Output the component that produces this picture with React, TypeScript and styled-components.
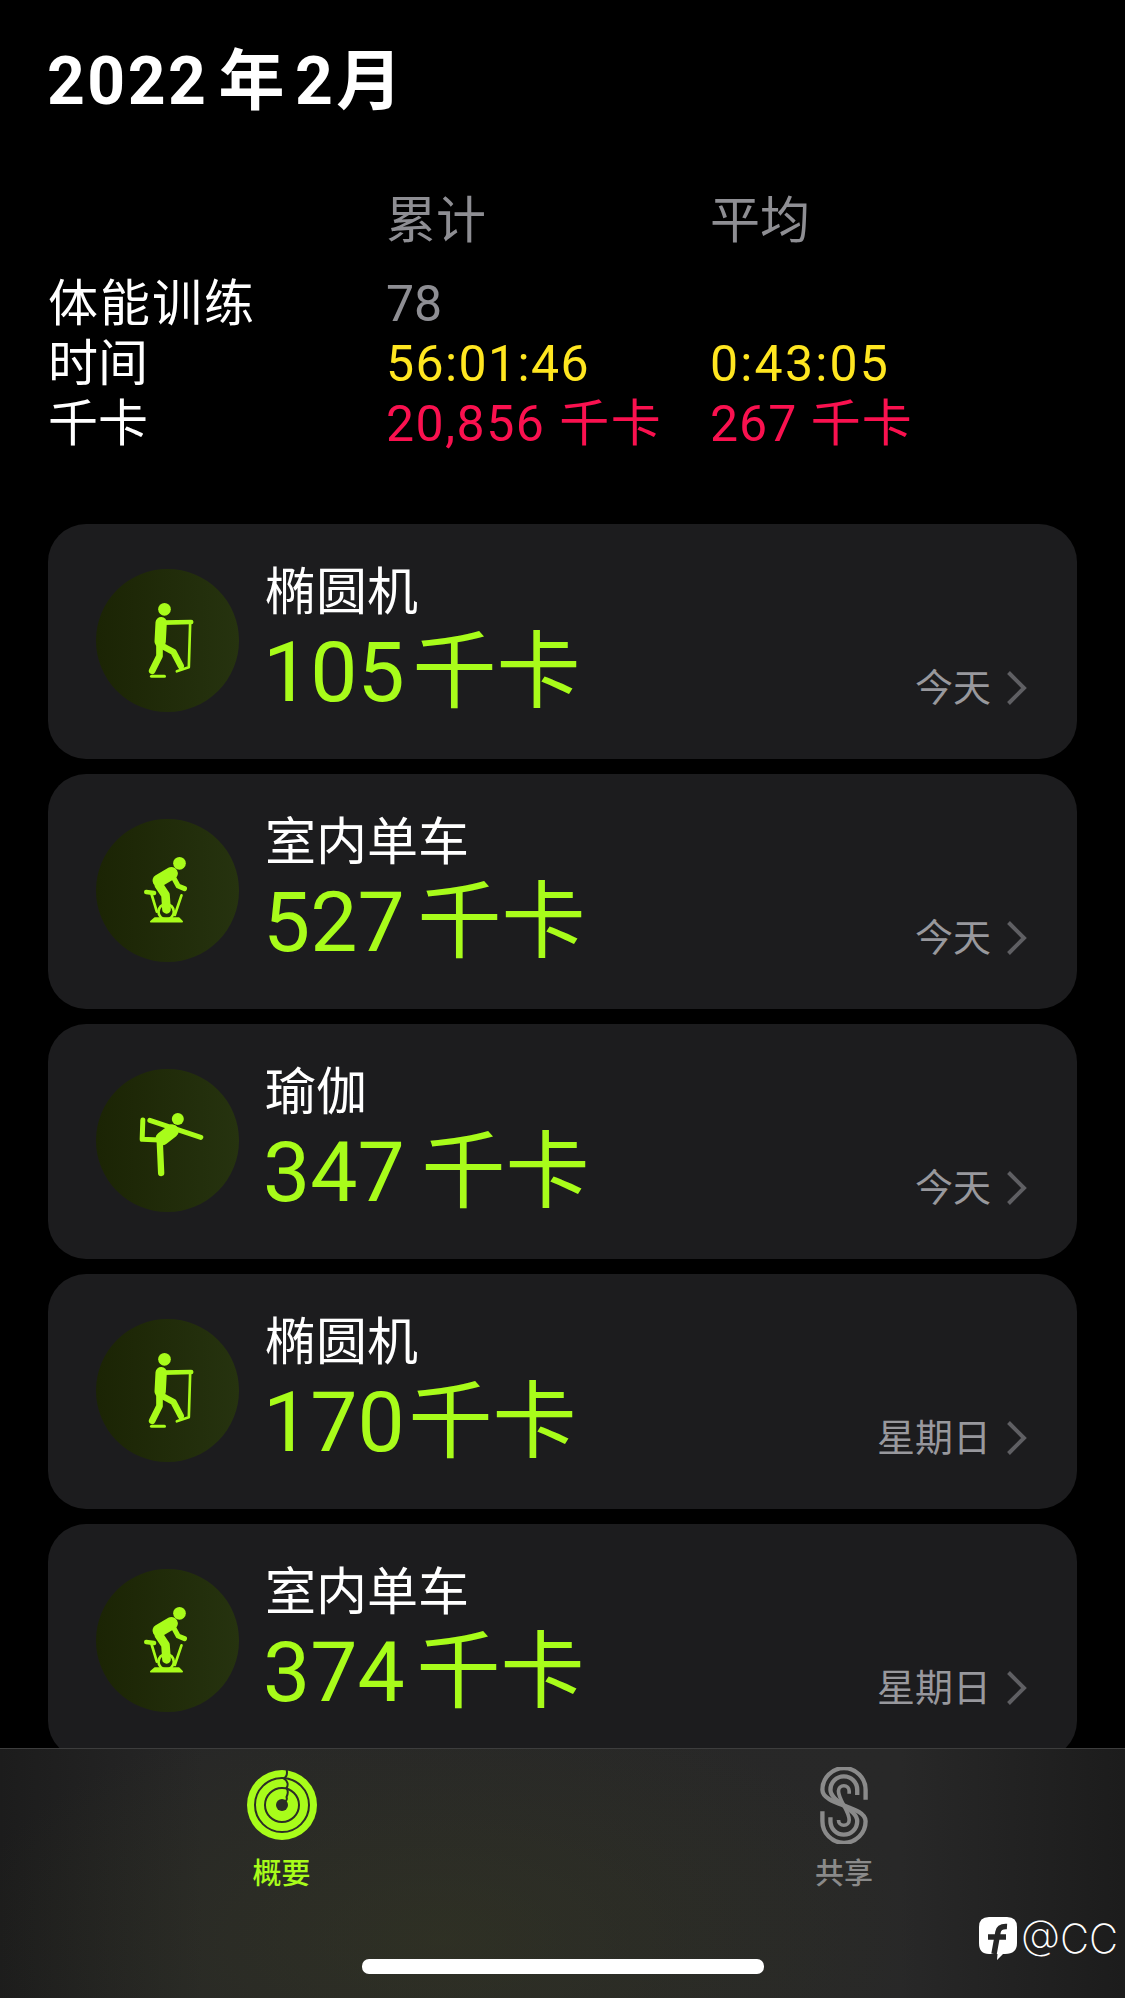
import React from "react";
import styled, { createGlobalStyle } from "styled-components";

const Global = createGlobalStyle`
  html, body { margin: 0; padding: 0; background: #000; }
  body { font-family: Roboto, "Noto Sans CJK SC", sans-serif; }
`;

const Page = styled.div`
  position: relative;
  width: 1125px;
  height: 1998px;
  overflow: hidden;
  background: #000;
  padding: 43px 48px 0;
  box-sizing: border-box;
`;

const Title = styled.h1`
  margin: 0 0 0 -1px;
  display: flex;
  font-size: 66px;
  line-height: 78px;
  font-weight: 700;
  letter-spacing: 2.5px;
  color: #fff;
`;

const TitlePart = styled.span<{ $gap: number }>`
  margin-right: ${(p) => p.$gap}px;
`;

const Stats = styled.section`
  display: grid;
  grid-template-columns: 338px 324px 1fr;
  grid-template-rows: 83px 60px 60px 60px;
  margin-top: 70px;
  font-size: 50px;
  line-height: 60px;
`;

const Cell = styled.div<{ $c: string; $ls?: number }>`
  color: ${(p) => p.$c};
  white-space: nowrap;
  letter-spacing: ${(p) => p.$ls ?? 0}px;
`;

const Cards = styled.div`
  display: flex;
  flex-direction: column;
  gap: 15px;
  margin-top: 70px;
`;

const Card = styled.article`
  position: relative;
  display: flex;
  align-items: flex-start;
  height: 235px;
  flex: none;
  box-sizing: border-box;
  padding: 45px 48px 0 48px;
  background: #1c1c1e;
  border-radius: 38px;
`;

const Badge = styled.div`
  flex: none;
  width: 143px;
  height: 143px;
  border-radius: 50%;
  background: linear-gradient(90deg, #1b2404 0%, #26330f 100%);
`;

const BadgeIcon = styled.svg`
  display: block;
  width: 143px;
  height: 143px;
`;

const Info = styled.div`
  flex: 1;
  margin-left: 26px;
  margin-top: -8px;
`;

const Name = styled.div`
  font-size: 51px;
  line-height: 64px;
  color: #fff;
`;

const Kcal = styled.div<{ $ws: number }>`
  font-size: 84px;
  line-height: 96px;
  color: #a8fc1a;
  margin-left: -2px;
  white-space: nowrap;
  word-spacing: ${(p) => p.$ws}px;
`;

const Day = styled.div`
  display: flex;
  align-items: center;
  gap: 15px;
  margin-top: 94px;
  font-size: 38px;
  line-height: 50px;
  color: #98989d;
  margin-right: 2px;
`;

const Chevron = styled.svg`
  width: 21px;
  height: 36px;
  flex: none;
`;

const TabBar = styled.nav`
  position: absolute;
  left: 0;
  right: 0;
  bottom: 0;
  height: 250px;
  border-top: 1px solid #3d3d3d;
  box-sizing: border-box;
  background:
    radial-gradient(ellipse 480px 240px at 440px 190px, rgba(56, 60, 32, 0.42), rgba(56, 60, 32, 0) 100%),
    linear-gradient(90deg, #1c1c1c 0%, #272727 18%, #282828 80%, #1c1c1c 100%);
`;

const Tabs = styled.div`
  display: grid;
  grid-template-columns: 563px 562px;
`;

const Tab = styled.div<{ $c: string }>`
  display: flex;
  flex-direction: column;
  align-items: center;
  color: ${(p) => p.$c};
  font-size: 29px;
  font-weight: 500;
  line-height: 36px;
`;

const IconSlot = styled.div<{ $top: number }>`
  height: 107px;
  padding-top: ${(p) => p.$top}px;
  box-sizing: border-box;
`;

const TabIcon = styled.svg`
  display: block;
`;

const Home = styled.div`
  position: absolute;
  left: 362px;
  top: 210px;
  width: 402px;
  height: 15px;
  border-radius: 7px;
  background: #fff;
`;

const Watermark = styled.div`
  position: absolute;
  left: 978px;
  top: 168px;
  display: flex;
  align-items: center;
  gap: 3px;
  color: #fff;
  font-family: Inter, sans-serif;
  font-weight: 200;
  font-size: 40px;
  line-height: 44px;
`;

const Gr = "#a8fc1a";
const Dark = "#2b2d26";

const Elliptical = () => (
  <BadgeIcon viewBox="0 0 143 143">
    <g transform="translate(3.5 11) scale(.3333)" fill="none" stroke={Gr} strokeLinecap="round" strokeLinejoin="round">
      <circle cx="195" cy="88" r="19" fill={Gr} stroke="none" />
      <path d="M185 128 L182 185" strokeWidth="34" />
      <path d="M192 128 L275 126" strokeWidth="14" />
      <path d="M272 130 L268 262 L232 274" strokeWidth="8" />
      <path d="M180 190 L180 228 L158 272" strokeWidth="20" />
      <path d="M187 197 L222 216 L244 258" strokeWidth="19" />
      <path d="M156 289 L195 289" strokeWidth="9" />
    </g>
  </BadgeIcon>
);

const Bike = () => (
  <BadgeIcon viewBox="0 0 143 143">
    <g transform="translate(3.5 11) scale(.3333)" fill="none" stroke={Gr} strokeLinecap="round" strokeLinejoin="round">
      <circle cx="240" cy="100" r="19" fill={Gr} stroke="none" />
      <path d="M178 152 L216 130" strokeWidth="38" />
      <path d="M218 135 L236 168 L255 176" strokeWidth="15" />
      <path d="M178 165 L198 195 L201 238" strokeWidth="26" />
      <circle cx="200" cy="245" r="23" strokeWidth="8" />
      <path d="M140 186 L164 189" strokeWidth="13" />
      <path d="M156 192 L172 245" strokeWidth="8" />
      <path d="M246 196 L226 255" strokeWidth="8" />
      <path d="M154 275 L248 275 L238 264 L166 264 Z" fill={Gr} strokeWidth="5" />
    </g>
  </BadgeIcon>
);

const Yoga = () => (
  <BadgeIcon viewBox="0 0 143 143">
    <g transform="translate(-16.5 -19) scale(.3333)" fill="none" stroke={Gr} strokeLinecap="round" strokeLinejoin="round">
      <circle cx="295" cy="207" r="18" fill={Gr} stroke="none" />
      <path d="M211 211 L364 262" strokeWidth="15" />
      <path d="M278 243 L248 266" strokeWidth="40" />
      <path d="M241 280 L245 369" strokeWidth="19" />
      <path d="M190 210 L188 268 L240 270" strokeWidth="15" />
    </g>
  </BadgeIcon>
);

const rows = [
  { name: "椭圆机", kcal: "105", day: "今天", ws: -13, Icon: Elliptical },
  { name: "室内单车", kcal: "527", day: "今天", ws: -8, Icon: Bike },
  { name: "瑜伽", kcal: "347", day: "今天", ws: -4, Icon: Yoga },
  { name: "椭圆机", kcal: "170", day: "星期日", ws: -17, Icon: Elliptical },
  { name: "室内单车", kcal: "374", day: "星期日", ws: -9, Icon: Bike },
];

export default function App() {
  return (
    <Page>
      <Global />
      <Title>
        <TitlePart $gap={10}>2022</TitlePart>
        <TitlePart $gap={8}>年</TitlePart>
        <TitlePart $gap={1}>2</TitlePart>
        <TitlePart $gap={0}>月</TitlePart>
      </Title>
      <Stats>
        <Cell $c="#fff" />
        <Cell $c="#8e8e93">累计</Cell>
        <Cell $c="#8e8e93">平均</Cell>
        <Cell $c="#fff" $ls={2}>体能训练</Cell>
        <Cell $c="#8e8e93">78</Cell>
        <Cell $c="#8e8e93" />
        <Cell $c="#fff">时间</Cell>
        <Cell $c="#ffe620" $ls={1.4}>56:01:46</Cell>
        <Cell $c="#ffe620" $ls={2.2}>0:43:05</Cell>
        <Cell $c="#fff">千卡</Cell>
        <Cell $c="#fa114f" $ls={1.5}>20,856 千卡</Cell>
        <Cell $c="#fa114f" $ls={1}>267 千卡</Cell>
      </Stats>
      <Cards>
        {rows.map((r, i) => (
          <Card key={i}>
            <Badge><r.Icon /></Badge>
            <Info>
              <Name>{r.name}</Name>
              <Kcal $ws={r.ws}>{r.kcal} 千卡</Kcal>
            </Info>
            <Day>
              {r.day}
              <Chevron viewBox="0 0 21 36">
                <path d="M2.5 2.5 L18 18 L2.5 33.5" fill="none" stroke="#5f5f63" strokeWidth="4" />
              </Chevron>
            </Day>
          </Card>
        ))}
      </Cards>
      <TabBar>
        <Tabs>
          <Tab $c={Gr}>
            <IconSlot $top={21}>
              <TabIcon width="70" height="70" viewBox="0 0 70 70">
                <circle cx="35" cy="35" r="35" fill={Gr} />
                <circle cx="35" cy="35" r="27" fill="none" stroke={Dark} strokeWidth="2" />
                <circle cx="35" cy="35" r="17" fill="none" stroke={Dark} strokeWidth="2" />
                <circle cx="35" cy="35" r="6" fill={Dark} />
                <path d="M39.7 0 C40.5 4 39.5 7 36.7 8.5 C41 11 41.5 15 39.5 18 C41.5 21 41 24 39.5 27 C40.5 29 39 32 36.5 33" fill="none" stroke={Dark} strokeWidth="2" />
              </TabIcon>
            </IconSlot>
            概要
          </Tab>
          <Tab $c="#8a8a8a">
            <IconSlot $top={18}>
              <TabIcon width="48" height="77" viewBox="27 20 143 230" fill="none" stroke="#8a8a8a" strokeWidth="13" strokeLinecap="butt">
                <path d="M163 118 V88 A64 64 0 0 0 34 88 C34 135 163 135 163 182 A64 64 0 0 1 34 182 V152" />
                <path d="M138 104 V88 A40 40 0 0 0 58 88 C58 125 138 145 138 182 A40 40 0 0 1 58 182 V170" />
                <path d="M114 100 V92 A16 16 0 0 0 82 92 C82 120 114 150 114 178 A16 16 0 0 1 82 178" strokeWidth="11" />
              </TabIcon>
            </IconSlot>
            共享
          </Tab>
        </Tabs>
        <Home />
        <Watermark>
          <svg width="40" height="44" viewBox="0 0 40 44">
            <path d="M11 0 H29 Q39 0 39 10 V26 Q39 37 27 37 H25 L19 43 L19.5 37 H11 Q1 37 1 26 V10 Q1 0 11 0 Z" fill="#fff" />
            <path d="M16 37 L20 15 Q21 9 29 9.5 M10 20 H28" fill="none" stroke="#262626" strokeWidth="5.5" />
          </svg>
          @CC
        </Watermark>
      </TabBar>
    </Page>
  );
}
